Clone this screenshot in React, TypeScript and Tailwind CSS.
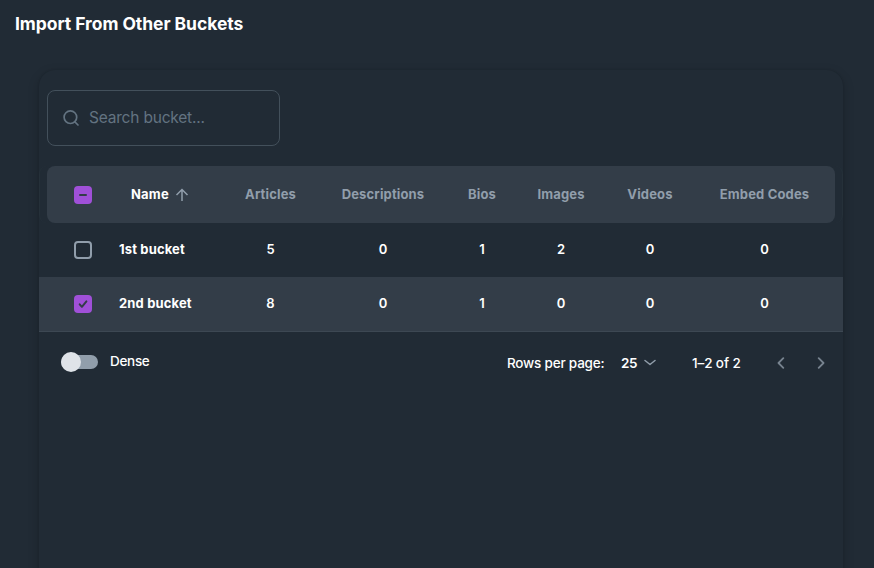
import React from "react";

const columns = ["Articles", "Descriptions", "Bios", "Images", "Videos", "Embed Codes"];

const rows = [
  { name: "1st bucket", values: [5, 0, 1, 2, 0, 0], selected: false },
  { name: "2nd bucket", values: [8, 0, 1, 0, 0, 0], selected: true },
];

const grid = "grid grid-cols-[80px_110px_83px_142px_56px_102px_76px_153px] items-center";

function Checkbox({ state }: { state: "on" | "off" | "mixed" }) {
  if (state === "off") {
    return <span className="block size-[18px] rounded-[4px] border-2 border-[#919eab]" />;
  }
  return (
    <span className="flex size-[18px] items-center justify-center rounded-[4px] bg-[#a050d8]">
      <svg width="18" height="18" viewBox="0 0 18 18" fill="none" stroke="#333d48" strokeWidth="2" strokeLinecap="round" strokeLinejoin="round">
        {state === "mixed" ? <path d="M6 9h6" /> : <path d="M5.7 9.3l2.2 2.5 4.5-5.4" />}
      </svg>
    </span>
  );
}

export default function App() {
  return (
    <div className="flex h-[568px] w-[874px] flex-col overflow-hidden bg-[#212b35] font-['Inter',sans-serif] text-[13px] text-white">
      <h1 className="h-[70px] shrink-0 pl-[15px] pt-[10px] text-[17.5px] font-bold leading-[28px] tracking-[-0.06px]">
        <span>Import From Other Buckets</span>
      </h1>
      <main className="ml-[39px] mr-[31px] h-[600px] shrink-0 rounded-[16px] bg-[#212b35] pt-5 shadow-[0_0_2px_rgba(0,0,0,0.15),0_4px_12px_rgba(0,0,0,0.2)]">
        <label className="ml-2 flex h-14 w-[233px] items-center rounded-lg border border-[#43505b] pl-[15px] text-[#637381]">
          <svg width="17" height="17" viewBox="0 0 17 17" fill="none" stroke="currentColor" strokeWidth="1.7" strokeLinecap="round">
            <circle cx="7.4" cy="7.2" r="6.3" />
            <path d="M12 12l3 3" />
          </svg>
          <span className="ml-[9px] text-[15.5px] tracking-[-0.2px]">Search bucket...</span>
        </label>

        <div className="mt-5 rounded-lg border-x border-[#253039] px-[7px]">
          <div className={`h-[57px] rounded-lg bg-[#333d48] ${grid}`}>
            <div className="flex pl-[27px]"><Checkbox state="mixed" /></div>
            <div className="flex items-center pl-1 font-bold">
              <span className="w-[40px] tracking-[0.2px]">Name</span>
              <svg className="ml-[4px]" width="14" height="14" viewBox="0 0 14 14" fill="none" stroke="#919eab" strokeWidth="1.5">
                <path d="M7 13V1.8M1.5 7L7 1.5 12.5 7" />
              </svg>
            </div>
            {columns.map((label) => (
              <div key={label} className="-ml-4 text-center font-bold text-[#919eab]">
                <span className="tracking-[0.15px]">{label}</span>
              </div>
            ))}
          </div>
        </div>

        {rows.map((r) => (
          <div key={r.name} className={`${grid} ${r.selected ? "h-[55px] border-b border-[#3d4853] bg-[#333d48]" : "h-[54px]"}`}>
            <div className="flex pl-[35px]"><Checkbox state={r.selected ? "on" : "off"} /></div>
            <div className="pb-px font-bold tracking-[0.15px]"><span>{r.name}</span></div>
            {r.values.map((v, i) => (
              <div key={i} className="pb-px text-center font-semibold">{v}</div>
            ))}
          </div>
        ))}

        <div className="flex h-[62px] items-center pl-[22px] font-medium">
          <div className="flex items-center pb-[2px]">
            <span className="flex h-[14px] w-[37px] items-center rounded-full bg-[#919eab]">
              <span className="size-5 shrink-0 rounded-full bg-[#dfe3e8]" />
            </span>
            <span className="ml-3 pb-px text-[13.5px] tracking-[-0.3px]">Dense</span>
          </div>
          <div className="ml-auto flex items-center pr-[18px] text-[13.5px]">
            <span className="w-[114px] tracking-[-0.2px]">Rows per page:</span>
            <span className="w-[23px] font-semibold tracking-[-0.5px]">25</span>
            <svg width="12" height="8" viewBox="0 0 12 8" fill="none" stroke="#919eab" strokeWidth="1.5" strokeLinecap="round" strokeLinejoin="round">
              <path d="M1 1.5l5 4 5-4" />
            </svg>
            <span className="ml-9 w-[85px] tracking-[-0.1px]">1–2 of 2</span>
            <svg width="8" height="12" viewBox="0 0 8 12" fill="none" stroke="#77838f" strokeWidth="1.8" strokeLinecap="round" strokeLinejoin="round">
              <path d="M6.3 1.2L1.5 6l4.8 4.8" />
            </svg>
            <svg className="ml-8" width="8" height="12" viewBox="0 0 8 12" fill="none" stroke="#77838f" strokeWidth="1.8" strokeLinecap="round" strokeLinejoin="round">
              <path d="M1.7 1.2L6.5 6l-4.8 4.8" />
            </svg>
          </div>
        </div>
      </main>
    </div>
  );
}
